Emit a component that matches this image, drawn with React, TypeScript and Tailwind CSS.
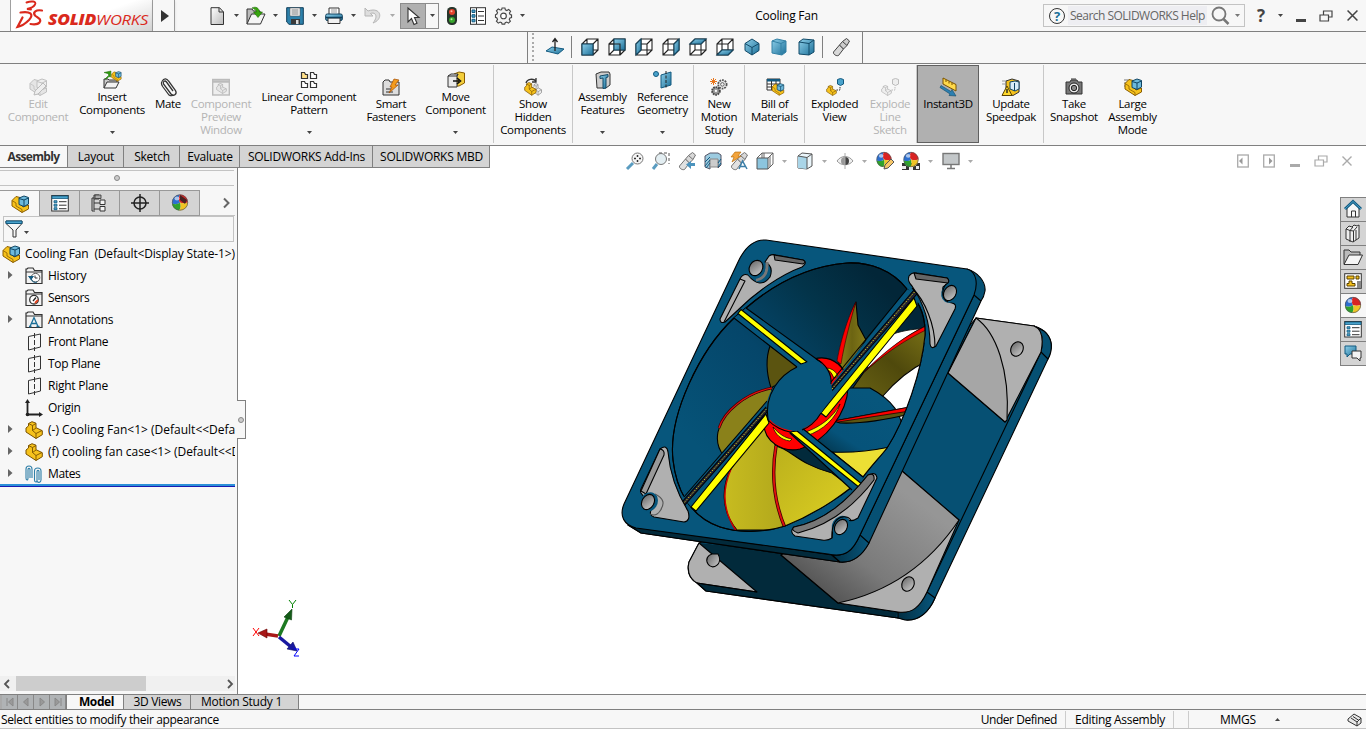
import type { ReactNode } from "react";

const K = "#333";
const BL = "#4aa3cc";
const DB = "#135a80";

function Svg({ w = 18, h = 18, children }: { w?: number; h?: number; children: ReactNode }) {
  return (
    <svg width={w} height={h} viewBox={`0 0 ${w} ${h}`} fill="none" className="block shrink-0 overflow-visible">
      {children}
    </svg>
  );
}

function Caret({ color = "#444" }: { color?: string }) {
  return (
    <Svg w={5} h={3}>
      <path d="M0 0h5L2.5 3z" fill={color} />
    </Svg>
  );
}

function Defs() {
  return (
    <svg width="0" height="0" className="absolute">
      <defs>
        <linearGradient id="blue" x1="0" y1="0" x2="1" y2="1">
          <stop offset="0" stopColor="#8fd0ea" />
          <stop offset="1" stopColor="#1b6f98" />
        </linearGradient>
        <linearGradient id="grey" x1="0" y1="0" x2="1" y2="1">
          <stop offset="0" stopColor="#fff" />
          <stop offset="1" stopColor="#bbb" />
        </linearGradient>
        <linearGradient id="surf" x1="902" y1="490" x2="820" y2="600" gradientUnits="userSpaceOnUse">
          <stop offset="0" stopColor="#969696" />
          <stop offset="0.6" stopColor="#7a7a7a" />
          <stop offset="1" stopColor="#505050" />
        </linearGradient>
        <linearGradient id="bore" x1="700" y1="450" x2="880" y2="280" gradientUnits="userSpaceOnUse">
          <stop offset="0" stopColor="#065378" />
          <stop offset="0.45" stopColor="#05466a" />
          <stop offset="0.75" stopColor="#03344a" />
          <stop offset="1" stopColor="#022638" />
        </linearGradient>
        <linearGradient id="rotor" x1="870" y1="395" x2="825" y2="465" gradientUnits="userSpaceOnUse">
          <stop offset="0" stopColor="#07567c" />
          <stop offset="0.6" stopColor="#06537a" />
          <stop offset="1" stopColor="#022a3b" />
        </linearGradient>
        <linearGradient id="olive" x1="838" y1="0" x2="866" y2="0" gradientUnits="userSpaceOnUse">
          <stop offset="0" stopColor="#8d8418" />
          <stop offset="0.5" stopColor="#6c6412" />
          <stop offset="1" stopColor="#857c1a" />
        </linearGradient>
        <linearGradient id="olive2" x1="920" y1="335" x2="870" y2="395" gradientUnits="userSpaceOnUse">
          <stop offset="0" stopColor="#716914" />
          <stop offset="0.5" stopColor="#4f490c" />
          <stop offset="1" stopColor="#635c12" />
        </linearGradient>
        <linearGradient id="yel1" x1="720" y1="0" x2="780" y2="0" gradientUnits="userSpaceOnUse">
          <stop offset="0" stopColor="#c9bd20" />
          <stop offset="1" stopColor="#b3a91c" />
        </linearGradient>
        <linearGradient id="yel2" x1="780" y1="450" x2="850" y2="510" gradientUnits="userSpaceOnUse">
          <stop offset="0" stopColor="#bdb21c" />
          <stop offset="1" stopColor="#dacd22" />
        </linearGradient>
        <linearGradient id="hole" x1="0" y1="0" x2="1" y2="0.6">
          <stop offset="0" stopColor="#666" />
          <stop offset="1" stopColor="#bdbdbd" />
        </linearGradient>
        <linearGradient id="round" x1="0" y1="0" x2="1" y2="0">
          <stop offset="0" stopColor="#022e42" />
          <stop offset="1" stopColor="#07567c" />
        </linearGradient>
      </defs>
    </svg>
  );
}

/* ---------- shared glyphs ---------- */

const Ball = ({ cx = 9, cy = 9, r = 8 }: { cx?: number; cy?: number; r?: number }) => (
  <g transform={`translate(${cx} ${cy}) scale(${r / 8})`}>
    <path d="M0 0C-2-3-1-6 0-8A8 8 0 0 0-8 1C-5 2-2 2 0 0z" fill="#2d6fd0" />
    <path d="M0 0C-2-3-1-6 0-8A8 8 0 0 1 8 0C5 1 2 1 0 0z" fill="#d92323" />
    <path d="M0 0C1 3 1 6-1 8A8 8 0 0 1-8 1C-5 2-2 2 0 0z" fill="#2fa32c" />
    <path d="M0 0C1 3 1 6-1 8A8 8 0 0 0 8 0C5 1 2 1 0 0z" fill="#f0c424" />
    <circle r="7.7" stroke="#555" strokeWidth=".7" />
    <ellipse cx="-3" cy="-4" rx="2.5" ry="2" fill="#fff" opacity=".6" />
  </g>
);

const Part = ({ c = "#f6c21c", s = "#7a5200" }: { c?: string; s?: string }) => (
  <g stroke={s} strokeWidth="1" strokeLinejoin="round">
    <path d="M1 7L3.500 5V2.500L7 .7l4 1.500v4.500l6.300 3v4L11 17.500 1 11z" fill={c} />
    <path d="M3.500 2.500L7.500 4.500v5l3.500 3v5M7.500 4.500L11 2.500M11 12.500l6-3M7.500 9.500L11 7" strokeWidth=".9" />
  </g>
);

const Asm = ({ dim = false }: { dim?: boolean }) => (
  <g strokeLinejoin="round" strokeWidth="1">
    <path d="M1 5.500L5 1.500l4 1V9l3 3 5.500-2v4L11 17.500 1 11z" fill={dim ? "#e4e4e4" : "#f6c21c"} stroke={dim ? "#bbb" : "#8a5d00"} />
    <path d="M1 5.500l4 2.500v3l6 3.500v3" stroke={dim ? "#bbb" : "#8a5d00"} strokeWidth=".8" />
    <path d="M8 3l5-2 4.500 1.500V9L13 11.500 8 9.500z" fill={dim ? "#eee" : "#6db9dc"} stroke={dim ? "#bbb" : "#0f4563"} />
    <path d="M8 3.500l5 1.500 4.500-2M13 5v6.500" stroke={dim ? "#bbb" : "#0f4563"} />
  </g>
);

const ListGlyph = () => (
  <>
    <rect x=".7" y="1.500" width="16.600" height="15.500" fill="#fff" stroke={K} />
    <path d="M1 2h16v2.500H1z" fill={BL} stroke={DB} strokeWidth=".8" />
    <path d="M3 6.700h3v2H3zM3 10.200h3v2H3zM3 13.700h3v2H3z" fill={BL} stroke={DB} strokeWidth=".8" />
    <path d="M8 7.700h7.500M8 11.200h7.500M8 14.700h7.500" stroke={K} />
  </>
);

const Folder = ({ children }: { children?: ReactNode }) => (
  <Svg>
    <path d="M1 16.500V2h1l1-1h5l1.500 2.500H17v13z" fill="#f2f2f2" stroke={K} strokeWidth="1.200" />
    <path d="M1 5h16" stroke={K} />
    {children}
  </Svg>
);

const Plane = () => (
  <Svg>
    <path d="M3.500 3.500l12-2.500v13l-12 3z" stroke="#333" />
    <path d="M9.500 0v18" stroke="#333" strokeDasharray="5 2" />
  </Svg>
);

/* ---------- title bar ---------- */

const NewDoc = () => (
  <Svg>
    <path d="M3 .7h8.500L15.500 5v12.500H3z" fill="url(#grey)" stroke={K} />
    <path d="M11 .7V5h4.500" stroke={K} />
  </Svg>
);
const OpenDoc = () => (
  <Svg w={20}>
    <path d="M1 17V2h5l1.500 2H14v5" fill="#bbb" stroke={K} />
    <path d="M1 17L5.500 7H19l-4.500 10z" fill="#f5f5f5" stroke={K} />
    <path d="M6 1c4-2 7 0 7.500 4h3l-4.500 5.500L7.500 5h3C10 3 8 1.500 6 1z" fill="#37a50e" stroke="#1f6b04" strokeWidth=".6" />
  </Svg>
);
const Save = () => (
  <Svg>
    <path d="M.7.7h16.600v16.600H3L.7 15z" fill="#2d81ab" stroke="#0f3e5a" />
    <path d="M4 1h10v8H4z" fill="#fff" stroke="#555" strokeWidth=".6" />
    <path d="M5.500 3h7M5.500 5h7M5.500 7h7" stroke="#777" />
    <path d="M5 12h9v5H5z" fill="#3a3a3a" />
    <path d="M10 13h2.500v4H10z" fill="#ddd" />
  </Svg>
);
const Print = () => (
  <Svg>
    <path d="M4 8V1h10v7" fill="#fff" stroke={K} />
    <path d="M6 3h6M6 5h6" stroke="#999" />
    <rect x=".7" y="7" width="16.600" height="6.500" rx="1.500" fill="url(#blue)" stroke="#0f3e5a" />
    <path d="M3 11h12v5.500H3z" fill="#f2f2f2" stroke={K} />
    <path d="M.7 10.500h16.600" stroke="#0f3e5a" strokeWidth="1.500" />
  </Svg>
);
const Undo = () => (
  <Svg>
    <path d="M1 1v8h8L6.500 6.500c5-2 8 3 2.500 9.500 9-3 9-13 0-13-2 0-3.500.5-5 1z" fill="#dedede" stroke="#b5b5b5" />
  </Svg>
);
const Pointer = () => (
  <Svg>
    <path d="M4 1v14l3.500-3.500 2.500 6 3-1.300-2.500-5.700H15z" fill="#fff" stroke={K} strokeWidth="1.100" />
  </Svg>
);
const Traffic = () => (
  <Svg w={12}>
    <rect x="1" y="0" width="10" height="18" rx="4.500" fill="#26352b" />
    <circle cx="6" cy="5" r="3" fill="#e4422c" />
    <circle cx="5.500" cy="4.200" r="1" fill="#ffb9a8" />
    <circle cx="6" cy="13" r="3" fill="#38a52d" />
    <circle cx="5.500" cy="12.200" r="1" fill="#b8f0a8" />
  </Svg>
);
const Opts = () => (
  <Svg>
    <rect x="1.500" y=".7" width="15" height="16.600" fill="#fff" stroke={K} />
    <path d="M7.500 1v16" stroke={K} />
    <path d="M3 3h3v2.500H3zM3 7.700h3v2.500H3zM3 12.300h3v2.500H3z" fill={BL} stroke={DB} />
    <path d="M9 4.500h6M9 9h6M9 13.500h6" stroke={K} />
  </Svg>
);
const Gear = ({ s = 18 }: { s?: number }) => (
  <svg width={s} height={s} viewBox="0 0 18 18" fill="none" className="block overflow-visible">
    <path d="M7.500 1h3l.5 2 1.600.7 1.900-1.200 2 2-1.200 1.900.7 1.600 1.500.5v2.600l-1.700.5-.7 1.600 1.200 1.900-2 2-1.900-1.200-1.600.7-.5 1.500h-2.800L7 16.600l-1.600-.7-1.900 1.200-2-2 1.200-1.900L2 11.600.5 11V8.300L2 7.500l.7-1.600-1.200-1.900 2-2 1.900 1.200L7 2.900z" fill="#f3f3f3" stroke="#444" strokeWidth="1.200" />
    <circle cx="9" cy="9.500" r="3" stroke="#444" strokeWidth="1.200" fill="#fff" />
  </svg>
);

function Restore({ c = "#444" }: { c?: string }) {
  return (
    <Svg w={14} h={12}>
      <path d="M1 5h8.500v6H1zM4.500 4.500V1H13v6H9.500" stroke={c} strokeWidth="1.200" />
    </Svg>
  );
}
function Close({ c = "#444", s = 10 }: { c?: string; s?: number }) {
  return (
    <svg width={s} height={s} viewBox="0 0 10 10" className="block">
      <path d="M.5.5l9 9M9.500.5l-9 9" stroke={c} strokeWidth="1.400" />
    </svg>
  );
}

function TitleBar() {
  const quick = [<NewDoc />, <OpenDoc />, <Save />, <Print />, <Undo />];
  return (
    <header className="flex h-8 items-center border-b border-[#808080] bg-[#f7f7f7]">
      <div className="ml-[10px] flex h-[31px] w-[143px] items-start border-x border-[#a0a0a0] bg-[linear-gradient(160deg,#fff_55%,#d4d4d4)]">
        <svg width="140" height="30" viewBox="11 0 140 30" className="block">
          <g fill="none" stroke="#da291c" strokeWidth="2.200" strokeLinecap="round">
            <path d="M26.500 2.500C31 .8 37 1 35 4.500 33.500 7.500 29.500 8.500 27 9L31 9.500" strokeWidth="1.900" />
            <path d="M20.500 12.500C30 11 34.500 14 29 20 26 23 22 26 17.500 27L22.500 17.500" />
            <path d="M42 10.500C36 9.500 32.500 12 35 15.500 38 18 42 19 39.500 22.500 37.500 25 34 24.500 30.500 24" />
          </g>
          <text x="48" y="24.700" fontFamily="Open Sans, sans-serif" fontStyle="italic" fontWeight="800" fontSize="15" textLength="48" lengthAdjust="spacingAndGlyphs" fill="#da291c">SOLID</text>
          <text x="96" y="24.700" fontFamily="Open Sans, sans-serif" fontStyle="italic" fontSize="15" textLength="52" lengthAdjust="spacingAndGlyphs" fill="#da291c">WORKS</text>
        </svg>
      </div>
      <div className="flex h-8 w-[22px] items-center border-r border-[#999] pl-2 shadow-sm">
        <Svg w={8} h={12}><path d="M0 0l8 6-8 6z" fill="#333" /></Svg>
      </div>
      <div className="ml-[30px] flex">
        {quick.map((q, i) => (
          <div key={i} className="flex items-center">
            <div className="flex w-6 justify-center">{q}</div>
            <div className="flex w-[15px] justify-center"><Caret color={i === 4 ? "#aaa" : "#444"} /></div>
          </div>
        ))}
      </div>
      <div className="flex h-[26px] w-[39px] border border-[#8c8c8c]">
        <div className="flex w-[25px] items-center justify-center border-r border-[#8c8c8c] bg-[#b0b0b0]"><Pointer /></div>
        <div className="flex flex-1 items-center justify-center"><Caret /></div>
      </div>
      <div className="flex w-[26px] justify-center"><Traffic /></div>
      <div className="flex w-[26px] justify-center"><Opts /></div>
      <div className="flex w-[25px] justify-center"><Gear s={17} /></div>
      <div className="flex w-[13px] justify-center"><Caret /></div>
      <div className="ml-[187px] w-[141px] pt-px text-center">Cooling Fan</div>
      <div className="ml-auto flex h-[23px] w-[202px] items-center border border-[#c3c3c3] text-[#666]">
        <span className="ml-[5px] flex h-4 w-4 shrink-0 items-center justify-center rounded-full border border-[#333] text-[13px] font-bold text-[#1b6f98]">?</span>
        <span className="ml-[3px] flex h-[19px] w-[139px] shrink-0 items-center whitespace-nowrap bg-[#eeeef2] pl-[2px] pt-px tracking-[-0.52px]">Search SOLIDWORKS Help</span>
        <span className="ml-[4px]">
          <Svg w={19} h={20}>
            <circle cx="8" cy="8" r="6.500" stroke="#777" strokeWidth="1.800" />
            <path d="M12.500 13l5 5" stroke="#777" strokeWidth="2.500" />
          </Svg>
        </span>
        <span className="ml-[5px]"><Caret color="#777" /></span>
      </div>
      <div className="flex w-[121px] items-center">
        <span className="ml-[12px] w-[12px] text-[17px] font-bold leading-none text-[#444]">?</span>
        <span className="ml-[9px]"><Caret /></span>
        <span className="ml-[13px] mt-[10px] h-[3px] w-[10px] bg-[#444]" />
        <span className="ml-[13px]"><Restore /></span>
        <span className="ml-[14px]"><Close s={11} /></span>
      </div>
    </header>
  );
}

/* ---------- view cube bar ---------- */

const cubeFaces = [
  "M1 6h11v11H1z",
  "M6 1h11v11H6z",
  "M1 6l5-5v11l-5 5z",
  "M12 6l5-5v11l-5 5z",
  "M1 6l5-5h11l-5 5z",
  "M1 17l5-5h11l-5 5z",
];

function ViewBar() {
  return (
    <div className="flex h-8 border-b border-[#808080] bg-[#f7f7f7]">
      <div className="ml-[527px] flex w-[336px] items-center border-x border-[#808080] pb-px">
        <div className="ml-1 flex h-7 w-[3px] flex-col justify-between">
          {[0, 1, 2, 3, 4, 5, 6].map((i) => <span key={i} className="h-[2px] w-[2px] bg-[#aaa]" />)}
        </div>
        <div className="ml-[8px] flex w-[24px] justify-center">
          <Svg>
            <path d="M0 13l6-4 12 2-6 5z" fill="url(#blue)" stroke={DB} />
            <path d="M9 13V1M6.500 4L9 .5 11.500 4" stroke="#222" strokeWidth="1.300" />
          </Svg>
        </div>
        <div className="ml-[4px] h-[22px] w-px bg-[#808080]" />
        <div className="ml-[4px] flex">
          {cubeFaces.map((d, i) => (
            <div key={i} className="flex w-[27px] justify-center">
              <Svg>
                <path d="M1 6h11v11H1zM6 1h11v11H6zM1 6l5-5M12 6l5-5M1 17l5-5M12 17l5-5" fill="#fff" stroke="#222" strokeWidth="1.100" />
                <path d={d} fill="url(#blue)" stroke="#14455f" strokeWidth="1.100" />
                {i === 1 && <path d="M1 6h11v11" stroke="#222" strokeWidth="1.100" />}
              </Svg>
            </div>
          ))}
          <div className="flex w-[27px] justify-center">
            <Svg><path d="M9 1l7 4.500v7L9 17l-7-4.500v-7z" fill="url(#blue)" stroke="#124a68" /><path d="M2 5.500l7 4 7-4M9 9.500V17" stroke="#124a68" /></Svg>
          </div>
          <div className="flex w-[27px] justify-center">
            <Svg><path d="M2 3l5-2 9 2v11l-4 3-10-2z" fill="url(#blue)" stroke="#3481a5" /><path d="M2 3l9 2.500 5-2.500M11 5.500V17" stroke="#3481a5" /></Svg>
          </div>
          <div className="flex w-[27px] justify-center">
            <Svg><path d="M2 4l4-3 11 1v12l-5 3-10-1z" fill="url(#blue)" stroke="#124a68" /><path d="M2 4l10 1.500L17 2M12 5.500V17" stroke="#124a68" /></Svg>
          </div>
        </div>
        <div className="ml-[3px] h-[22px] w-px bg-[#808080]" />
        <div className="ml-[9px]">
          <Svg w={19}><Spyglass /></Svg>
        </div>
      </div>
    </div>
  );
}

const Spyglass = () => (
  <>
    <path d="M1.500 14l6-7 4 4-5 6.500c-2 .8-5.500-1-5-3.500z" fill="#d8d8d8" stroke="#444" />
    <path d="M7.500 7l3-3.500 4-3 3 2.500-2.500 4.500-3.500 3.500z" fill="#ccc" stroke="#444" />
    <path d="M10.500 3.500l4.500 4" stroke="#444" />
  </>
);

/* ---------- ribbon ---------- */

const ic = {
  edit: <Svg><g opacity=".9"><Asm dim /></g><path d="M5 17l1-4 8-8 3 3-8 8z" fill="#eee" stroke="#bbb" /></Svg>,
  insert: (
    <Svg>
      <path d="M1 17V8h4l1 1h8v3" fill="#ccc" stroke={K} />
      <path d="M1 17l3-6h12l-3 6z" fill="#f2f2f2" stroke={K} />
      <g transform="translate(8 0) scale(.58)"><Asm /></g>
      <path d="M2 8l4-4-1.500-1.500L1 1.500 8 0l-.5 6L6 5.500 3.500 8z" fill="#2f9a10" stroke="#1c6a05" strokeWidth=".5" />
    </Svg>
  ),
  mate: (
    <Svg>
      <path d="M3 3.500C5-.5 8 .5 9.500 3l7 9.500c2 3.500-2 6.500-4.500 3.500L4.500 6C3.500 3.500 6 2 7.500 4l6.500 9" stroke={K} strokeWidth="1.300" />
      <path d="M3 3.500c-1.500 2 0 4 1 5.500l6 8c2.500 1.500 4 .5 4-.5" stroke={K} strokeWidth="1.200" />
    </Svg>
  ),
  preview: (
    <Svg>
      <rect x=".7" y="1.500" width="16.600" height="15.500" fill="#eee" stroke="#bbb" strokeWidth="1.400" />
      <path d="M1 3.500h16" stroke="#bbb" strokeWidth="2.500" />
      <g transform="translate(4 5) scale(.6)"><Part c="#e6e6e6" s="#aaa" /></g>
    </Svg>
  ),
  linear: (
    <Svg>
      <path d="M1.500 1.500h3l1 2h2v4h-6z" fill="#ffe08a" stroke={K} strokeWidth="1.200" />
      <path d="M10.500 1.500h3l1 2h2v4h-6zM1.500 10.500h3l1 2h2v4h-6zM10.500 10.500h3l1 2h2v4h-6z" fill="#fff" stroke={K} strokeWidth="1.200" />
    </Svg>
  ),
  smart: (
    <Svg>
      <path d="M1 17V4l2-2h4l1 2h9v13z" fill="#ddd" stroke={K} />
      <path d="M4 14h7M4 11h5" stroke={K} />
      <path d="M12 1l5 1-4 5h3l-9 8 3-6H8z" fill="#f49c1c" stroke="#a34c00" strokeWidth=".7" />
    </Svg>
  ),
  move: (
    <Svg>
      <path d="M7 3l5-2 5.500 1v10L12 15H8z" fill="#f4cf3c" stroke="#8a5d00" />
      <path d="M1 5l3-2h7l-1 2v11H1z" fill="#e9e9e9" stroke={K} /><path d="M1 5h9M10 5l1-2" stroke={K} />
      <path d="M6 10h6M10 7l3.500 3-3.500 3" stroke="#111" strokeWidth="1.600" />
    </Svg>
  ),
  show: (
    <Svg>
      <g transform="translate(8 5) scale(.55 .7)"><Part c="#eee" s="#777" /></g>
      <g transform="translate(0 4) scale(.7 .76)"><Part /></g>
      <path d="M2 5c1-4 7-5 10-2M12 0v4H8" stroke={K} strokeWidth="1.300" />
    </Svg>
  ),
  feat: (
    <Svg>
      <path d="M2 3l5-2h8l1 2v11l-4 3H3z" fill="#ccc" stroke={K} />
      <path d="M6 5l8-1.500V6l-2 .5V17l-3 .5V7L6 7.500z" fill="url(#blue)" stroke="#124a68" />
    </Svg>
  ),
  ref: (
    <Svg>
      <path d="M7 4l10-3v13L7 17z" fill="url(#blue)" stroke={DB} /><path d="M12 0v18" stroke="#222" strokeDasharray="3 1.500" />
      <circle cx="2" cy="3" r="2.500" fill={BL} stroke={DB} />
    </Svg>
  ),
  motion: (
    <Svg>
      <g transform="translate(7 1) scale(.6)"><circle cx="9" cy="9" r="7" stroke="#555" strokeWidth="3" strokeDasharray="3 1.500" fill="#eee" /><circle cx="9" cy="9" r="3" stroke="#555" strokeWidth="1.500" /></g>
      <g transform="translate(1 8) scale(.55)"><circle cx="9" cy="9" r="7" stroke="#444" strokeWidth="3.500" strokeDasharray="3 1.500" fill="#999" /><circle cx="9" cy="9" r="2" fill="#fff" /></g>
      <path d="M3.500 0v7M0 3.500h7M1 1l5 5M6 1L1 6" stroke="#e8761c" />
    </Svg>
  ),
  bom: (
    <Svg>
      <path d="M1 1h13v11H1z" fill="#fff" stroke={K} /><path d="M1 1h13v2.500H1z" fill={DB} />
      <path d="M1 6h13M1 9h13M5.500 3v9M10 3v9" stroke={K} />
      <g transform="translate(5.500 5) scale(.7)"><Asm /></g>
    </Svg>
  ),
  explode: (
    <Svg>
      <g transform="translate(0 7) scale(.6)"><Part /></g>
      <path d="M11.500 1.500l3-1 3 1V6l-3 1.500-3-1.500z" fill={BL} stroke={DB} />
      <path d="M14 9v3h-4" stroke={K} strokeDasharray="1.500 1" />
    </Svg>
  ),
  sketch: (
    <Svg>
      <g transform="translate(0 7) scale(.6)"><Part c="#eee" s="#aaa" /></g>
      <path d="M11.500 1.500l3-1 3 1V6l-3 1.500-3-1.500z" fill="#eee" stroke="#bbb" />
      <path d="M14 9v3h-4" stroke="#bbb" strokeDasharray="1.500 1" />
    </Svg>
  ),
  instant: (
    <Svg>
      <path d="M4 0l13 6.500V13L4 6z" fill="#ffd94a" stroke="#7a5200" /><path d="M7 2v2M10 3.500v2M13 5v2" stroke="#7a5200" />
      <path d="M2 7.500l10 6 1-2 4 6.500-7-.5 1-1.500L1 9.500z" fill="#2c7fb0" stroke="#124a68" strokeWidth=".6" />
    </Svg>
  ),
  speed: (
    <Svg>
      <path d="M4 3l6-2 7 2v11l-6 3.500L4 15z" fill="#f6c21c" stroke={K} />
      <path d="M8 4l5-1 4 1v7l-4 2-5-2z" fill="#d9eef8" stroke="#0f4563" /><path d="M12.500 5v8" stroke="#0f4563" />
      <path d="M5 8l5 9.500H0z" fill="#ffd92c" stroke="#5a4200" /><path d="M5 11v4" stroke="#222" strokeWidth="1.400" />
      <path d="M0 3h4M0 6h3" stroke="#999" />
    </Svg>
  ),
  camera: (
    <Svg>
      <path d="M1 4h4l1-2h6l1 2h4v12H1z" fill="#777" stroke={K} /><path d="M6 1h5" stroke={K} />
      <circle cx="9" cy="10" r="5" fill="#eee" stroke="#222" /><circle cx="9" cy="10" r="2.700" fill="#888" stroke="#222" />
    </Svg>
  ),
  large: <Svg><path d="M0 2h6M0 5h4M0 8h3" stroke="#777" /><Asm /></Svg>,
};

type Cell = { w: string; t: string[]; icon: ReactNode; drop?: boolean; off?: boolean; on?: boolean; sep?: boolean };

const ribbon: Cell[] = [
  { w: "w-[76px]", t: ["Edit", "Component"], icon: ic.edit, off: true },
  { w: "w-[72px]", t: ["Insert", "Components"], icon: ic.insert, drop: true },
  { w: "w-[40px]", t: ["Mate"], icon: ic.mate },
  { w: "w-[66px]", t: ["Component", "Preview", "Window"], icon: ic.preview, off: true },
  { w: "w-[110px]", t: ["Linear Component", "Pattern"], icon: ic.linear, drop: true },
  { w: "w-[54px]", t: ["Smart", "Fasteners"], icon: ic.smart },
  { w: "w-[76px]", t: ["Move", "Component"], icon: ic.move, drop: true, sep: true },
  { w: "w-[79px]", t: ["Show", "Hidden", "Components"], icon: ic.show, sep: true },
  { w: "w-[59px]", t: ["Assembly", "Features"], icon: ic.feat, drop: true },
  { w: "w-[62px]", t: ["Reference", "Geometry"], icon: ic.ref, drop: true, sep: true },
  { w: "w-[51px]", t: ["New", "Motion", "Study"], icon: ic.motion, sep: true },
  { w: "w-[60px]", t: ["Bill of", "Materials"], icon: ic.bom, sep: true },
  { w: "w-[59px]", t: ["Exploded", "View"], icon: ic.explode },
  { w: "w-[53px]", t: ["Explode", "Line", "Sketch"], icon: ic.sketch, off: true, sep: true },
  { w: "w-[62px]", t: ["Instant3D"], icon: ic.instant, on: true },
  { w: "w-[65px]", t: ["Update", "Speedpak"], icon: ic.speed, sep: true },
  { w: "w-[60px]", t: ["Take", "Snapshot"], icon: ic.camera },
  { w: "w-[57px]", t: ["Large", "Assembly", "Mode"], icon: ic.large },
];

function Ribbon() {
  return (
    <div className="flex h-[82px] border-b border-[#808080] bg-[#f7f7f7] pt-px">
      {ribbon.map((c, i) => (
        <div
          key={i}
          className={`flex h-[78px] shrink-0 flex-col items-center ${c.w} ${c.sep ? "border-r border-[#c8c8c8]" : ""} ${c.on ? "border border-[#606060] bg-[#b0b0b0]" : ""} ${c.off ? "text-[#b4b4b4]" : "text-black"} ${c.drop ? "pt-[6px]" : c.on ? "pt-3" : "pt-[13px]"}`}
        >
          {c.icon}
          <div className="mt-px whitespace-nowrap text-center text-[11.5px] leading-[13px] tracking-[-0.32px]">
            {c.t.map((l) => <div key={l}>{l}</div>)}
          </div>
          {c.drop && <div className="mt-[15px]"><Caret /></div>}
        </div>
      ))}
    </div>
  );
}

/* ---------- tabs + heads-up bar ---------- */

const tabs: [string, string][] = [
  ["w-[56px]", "Layout"],
  ["w-[56px]", "Sketch"],
  ["w-[60px]", "Evaluate"],
  ["w-[133px]", "SOLIDWORKS Add-Ins"],
  ["w-[117px]", "SOLIDWORKS MBD"],
];

const heads: [string, ReactNode, boolean?][] = [
  ["w-[26px]", <Svg><circle cx="11.500" cy="6.500" r="5.500" fill="#f5f5f5" stroke="#777" /><path d="M11.500 3v7M8 6.500h7" stroke="#333" strokeDasharray="2 3" strokeWidth="1.500" /><path d="M1 17l6-6" stroke="#5a9cc0" strokeWidth="3" /></Svg>],
  ["w-[26px]", <Svg><path d="M7 1h10v11" stroke="#555" strokeDasharray="3 2" /><circle cx="9" cy="7" r="5.500" fill="#e3eef2" stroke="#777" /><path d="M1 17l4-5" stroke="#5a9cc0" strokeWidth="3" /></Svg>],
  ["w-[26px]", <Svg><g opacity=".75"><Spyglass /></g><path d="M17 11v3h-4v3l-5-4.500L13 9v2z" fill="#4b93bd" /></Svg>],
  ["w-[26px]", <Svg><path d="M1 4l5-3h8l3 2v10l-3 3V8H6v9l-5-2z" fill="#9ccbe0" stroke="#556" /><path d="M6 7h8v8H6z" fill="#ccc" stroke="#888" /><path d="M1 14L6 8M1 10l5-5M2 16l4-5M14 15l3-4M14 11l3-4" stroke="#135a80" /></Svg>],
  ["w-[26px]", <Svg><g opacity=".75"><Spyglass /></g><path d="M5 0h6L8 4h3L2 10l2-5H1z" fill="#f3a43c" stroke="#b26400" strokeWidth=".6" /><path d="M9 17l3.500-8L17 17M10.500 14.500h5" stroke="#3c7fa8" strokeWidth="1.500" /></Svg>],
  ["w-[26px]", <Svg><path d="M1 6h11v11H1z" fill="#8cc5de" stroke="#555" /><path d="M1 6l5-5h11v11l-5 5M17 1l-5 5M8 1v5M14 4v11M6 1v5" stroke="#555" strokeWidth=".9" /></Svg>, true],
  ["w-[26px]", <Svg><path d="M2 4l4-3 10 1v12l-5 3-9-1z" fill="#eaf5fa" stroke="#555" /><path d="M2 4l9 1.500V17L2 16z" fill="#a9d5e8" /><path d="M2 4l9 1.500L16 2M11 5.500V17" stroke="#555" /></Svg>, true],
  ["w-[26px]", <Svg><path d="M1 9c4-6 12-6 16 0-4 5-12 5-16 0z" fill="#eee" stroke="#999" /><path d="M9 5a4 4 0 0 1 0 8z" fill="#444" /><path d="M9 5a4 4 0 0 0 0 8z" fill="#999" /><path d="M9 1v16" stroke="#aaa" /></Svg>, true],
  ["w-[26px]", <Svg><Ball cx={8} cy={7.500} r={7.500} /><path d="M8 17l1-4 6-6 3 3-6 6z" fill="#f6c76a" stroke="#555" /></Svg>],
  ["w-[26px]", <Svg><path d="M0 11h18v7H0z" fill="#333" /><path d="M0 14h4v3H0zM4 11h3v3H4zM11 11h3v3h-3zM7 15h4v3H7zM14 14h3v3h-3z" fill="#eee" /><Ball cx={9} cy={7.500} r={7.500} /></Svg>, true],
  ["w-[26px]", <Svg><rect x="1" y="1.500" width="16" height="11" fill="#c3c7c9" stroke="#777" strokeWidth="1.400" /><path d="M9 13v3M5 16.500h8" stroke="#777" strokeWidth="1.500" /></Svg>, true],
];

function PageNav({ flip = false }: { flip?: boolean }) {
  return (
    <Svg w={12} h={14}>
      <rect x=".7" y="1" width="10.600" height="12" stroke="#aaa" strokeWidth="1.300" />
      <path d={flip ? "M6 3.500l3.500 3.500L6 10.500z" : "M5.500 3.500L2 7l3.500 3.500z"} fill="#999" />
    </Svg>
  );
}

function TabRow() {
  const gaps = ["ml-0", "ml-0", "ml-0", "ml-0", "ml-0", "ml-0", "ml-[14px]", "ml-[14px]", "ml-[14px]", "ml-0", "ml-[14px]"];
  return (
    <div className="flex h-[22px] bg-white">
      <div className="flex h-[22px] w-[67px] items-center justify-center border-b border-[#808080] bg-[#f7f7f7] font-bold tracking-[-0.65px] text-[#333]">Assembly</div>
      <div className="flex border-l border-[#808080]">
        {tabs.map(([w, t]) => (
          <div key={t} className={`flex h-[22px] items-center justify-center whitespace-nowrap border-b border-r border-[#808080] bg-[#d4d4d4] pl-px ${w}`}>{t}</div>
        ))}
      </div>
      <div className="ml-[132px] flex h-[30px] items-center">
        {heads.map(([w, icon, drop], i) => (
          <div key={i} className={`flex items-center justify-center ${w} ${gaps[i]}`}>
            <div className="relative">
              {icon}
              {drop && <div className="absolute left-[26px] top-2"><Caret color="#aaa" /></div>}
            </div>
          </div>
        ))}
      </div>
      <div className="ml-auto mr-[14px] flex h-[30px] items-center">
        <PageNav />
        <span className="ml-[14px]"><PageNav flip /></span>
        <span className="ml-[15px] mt-[9px] h-[3px] w-[10px] bg-[#aaa]" />
        <span className="ml-[14px]"><Restore c="#aaa" /></span>
        <span className="ml-[14px]"><Close c="#aaa" s={10} /></span>
      </div>
    </div>
  );
}

/* ---------- feature tree ---------- */

const Clip2 = () => (
  <Svg>
    <g stroke="#2f7fa8" strokeWidth="1.100">
      <path d="M5 13V4.500c0-1.500-2-1.500-2 0V13c0 3-2 2.500-2 0V4c0-4 6-4 6 0v9" />
      <path d="M14 15V6.500c0-1.500-2-1.500-2 0V15c0 3-2.500 2.500-2.500 0V6c0-4 6.500-4 6.500 0v9c0 3-3.500 3-4 1" />
    </g>
  </Svg>
);

const rows: { t: string; icon: ReactNode; exp?: boolean; wide?: string }[] = [
  { t: "History", exp: true, icon: <Folder><circle cx="10.500" cy="10.700" r="4.300" fill="#fff" stroke="#555" /><path d="M10 8.500v2.500h2.500" stroke={K} /><path d="M3.500 9l2.500 3.500L8.500 9" fill={DB} stroke={DB} /><path d="M6 12c1 3 4 4 6 3" stroke={DB} /></Folder> },
  { t: "Sensors", icon: <Folder><circle cx="9" cy="10.700" r="4.300" fill="#fff" stroke="#333" strokeWidth="1.300" /><path d="M8 12l3-3.500" stroke="#222" strokeWidth="1.300" /><path d="M10 14l3-3" stroke="#e3401c" strokeWidth="1.800" /></Folder>, wide: "tracking-[-0.4px]" },
  { t: "Annotations", exp: true, icon: <Folder><path d="M5 15.500L9 6.500l4 9M6.500 12.500h5M4 15.500h2.500M11.500 15.500h3" stroke="#1b6f98" strokeWidth="1.300" /></Folder> },
  { t: "Front Plane", icon: <Plane />, wide: "tracking-[-0.35px]" },
  { t: "Top Plane", icon: <Plane />, wide: "tracking-[-0.35px]" },
  { t: "Right Plane", icon: <Plane /> },
  { t: "Origin", icon: <Svg><path d="M2.500 2v13.500H15" stroke="#222" strokeWidth="1.800" /><path d="M2.500 0L5 4H0zM18 15.500L14 13v5z" fill="#222" /><circle cx="2.500" cy="15.500" r="1.800" fill="#222" /></Svg> },
  { t: "(-) Cooling Fan<1> (Default<<Defa", exp: true, icon: <Svg><Part /></Svg>, wide: "tracking-[0px]" },
  { t: "(f) cooling fan case<1> (Default<<D", exp: true, icon: <Svg><Part /></Svg>, wide: "tracking-[-0.05px]" },
  { t: "Mates", exp: true, icon: <Clip2 />, wide: "tracking-[-0.35px]" },
];

function Tree() {
  const panelTabs = [
    <Svg><ListGlyph /></Svg>,
    <Svg><path d="M3 1h5v4H3zM3 5v11M3 4H1v13h3M3 9h6M3 15h6" stroke={K} /><path d="M9 6h5v4.500H9zM9 12.500h5V17H9z" stroke={K} fill="#f2f2f2" /><path d="M4 1h6v3.500H4z" fill="#aaa" stroke={K} strokeWidth=".8" /></Svg>,
    <Svg><circle cx="9" cy="9" r="6" stroke="#222" strokeWidth="1.500" /><path d="M9 0v18M0 9h18" stroke="#222" strokeWidth="1.500" /></Svg>,
    <Svg><Ball cy={8.500} /><path d="M9 1l7 5-2 4-5-4z" fill="#222" opacity=".8" /></Svg>,
  ];
  return (
    <aside className="flex w-[238px] shrink-0 flex-col border-r border-[#808080] bg-[#f7f7f7]">
      <div className="mr-[3px] mt-[2px] flex h-[16px] items-center justify-center border-y border-[#c3c3c3]">
        <span className="h-[6px] w-[6px] rounded-full border border-[#888] bg-[#ccc]" />
      </div>
      <div className="mt-1 flex h-[26px]">
        <div className="flex w-[39px] items-center justify-center border-t border-[#999]"><Svg><Asm /></Svg></div>
        <div className="flex border-l border-[#999]">
          {panelTabs.map((p, i) => (
            <div key={i} className="flex w-10 items-center justify-center border-b border-r border-t border-[#999] bg-[#d4d4d4]">{p}</div>
          ))}
        </div>
        <div className="mr-[2px] flex flex-1 items-center justify-end border-b border-[#c3c3c3] pr-[5px]">
          <Svg w={7} h={10}><path d="M1 .5L5.500 5 1 9.500" stroke="#666" strokeWidth="2" /></Svg>
        </div>
      </div>
      <div className="ml-[3px] flex h-[26px] w-[231px] items-center border border-[#c3c3c3] pl-px">
        <Svg><path d="M1 1h16v2.500L11 10v7H8v-7L1 3.500z" fill="#f5f5f5" stroke={K} /><path d="M1 1h16v2.500H1z" fill={BL} stroke={DB} /></Svg>
        <span className="ml-px mt-[6px]"><Caret /></span>
      </div>
      <div className="flex w-[235px] flex-col overflow-hidden whitespace-nowrap">
        <div className="flex h-[22px] items-center pl-[2px] pt-[1px]">
          <Svg><Asm /></Svg>
          <span className="ml-[5px] whitespace-pre tracking-[-0.16px]">Cooling Fan  (Default&lt;Display State-1&gt;)</span>
        </div>
        {rows.map((r) => (
          <div key={r.t} className="flex h-[22px] items-center pt-[2px]">
            <div className="ml-[8px] w-[17px] shrink-0 pb-[3px]">
              {r.exp && <Svg w={5} h={8}><path d="M0 0l4.500 4L0 8z" fill="#666" /></Svg>}
            </div>
            {r.icon}
            <span className={`ml-[5px] ${r.wide ?? ""}`}>{r.t}</span>
          </div>
        ))}
        <div className="h-[3px] border-b border-[#1a1ab0] bg-[#2a8fd8]" />
      </div>
      <div className="mb-[3px] mr-[2px] mt-auto flex h-[15px] items-center bg-[#f0f0f0]">
        <div className="flex w-4 justify-center pr-1"><Svg w={7} h={8}><path d="M6 0L2 4l4 4" stroke="#555" strokeWidth="1.800" /></Svg></div>
        <div className="h-[15px] w-[130px] bg-[#cdcdcd]" />
        <div className="ml-auto mr-[1px]"><Svg w={7} h={8}><path d="M1 0l4 4-4 4" stroke="#555" strokeWidth="1.800" /></Svg></div>
      </div>
    </aside>
  );
}

/* ---------- 3D model ---------- */

const bore =
  "M734 318C700 350 668 415 673 460C676 487 688 516 720 527C735 532 760 534 785 526C820 512 850 490 863 477C872 465 880 457 887 448C905 420 922 370 925 335C926 310 915 298 907 289C892 270 870 262 847 263C810 266 775 283 746 308z";

function Model() {
  const face = "#07567c";
  const side = "#065073";
  const dark = "#022a3b";
  const lt = "#b0b0b0";
  return (
    <svg width="1102" height="526" viewBox="238 168 1102 526" className="block shrink-0" strokeLinejoin="round" stroke="#000" strokeWidth="1.100" fill="none">
      {/* rear housing */}
      <path d="M976 318L1034 326C1046 329 1053 340 1051 349Q1050 355 1048 359L935 598C930 610 920 620 908 620L898 618L706 591L697 583C688 578 687 570 689 562L699 543L840 480z" fill={side} />
      <path d="M699 543L870 560L838 603L898 612Q895 617 898 618L706 591L697 583L757 592z" fill={dark} stroke="none" />
      <path d="M699 543L757 592L697 583C688 578 687 568 689 562z" fill={lt} />
      <path d="M697 583L706 591L898 618M697 583L757 592M838 603L898 612" />
      <path d="M898 612C912 614 920 605 927 592L935 598C928 614 918 621 905 620L898 618z" fill="url(#round)" />
      <path d="M1034 326C1044 330 1043 342 1041 352L1048 359C1053 350 1053 338 1044 331z" fill={side} />
      <path d="M1041 352L927 592" />
      <path d="M976 318L948 373L1005 422L1041 352C1043 342 1044 330 1034 326z" fill={lt} />
      <path d="M976 318C996 332 1010 370 1007 420L1005 422L948 373z" fill="#a6a6a6" />
      <path d="M902 471L959 520L927 592C920 607 912 614 898 612L838 603L781 555z" fill={lt} />
      <path d="M902 471L959 520C930 563 890 592 838 603L781 555z" fill="url(#surf)" />
      <ellipse cx="1017" cy="349" rx="6" ry="7.500" transform="rotate(25 1017 349)" fill="url(#hole)" />
      <ellipse cx="908" cy="584" rx="6" ry="7.500" transform="rotate(25 908 584)" fill="url(#hole)" />
      <path d="M718 554C724 564 712 571 708 564C705 559 708 555 712 554z" fill="url(#hole)" />

      {/* front flange thickness */}
      <path d="M967 269C978 272 986 282 985 291Q984 297 981 301L869 543C862 555 852 563 840 562L641 533L628 525L832 555L860 535L974 295z" fill={side} />
      <path d="M628 525L641 533L840 562L832 555z" fill={dark} />
      <path d="M832 555C848 556 854 548 860 535L869 543C862 556 852 563 840 562z" fill="url(#round)" />
      <path d="M974 295L981 301" />
      {/* front flange */}
      <path d="M738 262C744 249 752 239 766 240L967 269C977 272 978 284 974 295L860 535C853 551 845 558 828 554L636 528C624 525 619 516 624 504z" fill={face} />

      {/* bore and rotor */}
      <clipPath id="boreClip"><path d={bore} /></clipPath>
      <path d={bore} fill="url(#bore)" />
      <g clipPath="url(#boreClip)">
        <path d="M866 362L893 334C905 330 915 329 930 328V440L901 432L893 409L878 392z" fill="#fff" strokeWidth=".8" />
        <path d="M864 372C880 358 900 338 930 324V360C910 368 895 382 882 397L850 392z" fill="url(#olive2)" />
        <path d="M864 372C880 356 900 338 930 324L930 328C900 342 880 358 864 372z" fill="red" stroke="#300" strokeWidth=".6" />
        <path d="M838 362C842 340 850 315 856 302L858 325L866 340L845 372z" fill="url(#olive)" />
        <path d="M837 361C841 338 850 312 856 302C851 318 844 345 841 364z" fill="red" stroke="#300" strokeWidth=".6" />
        <path d="M845 388L870 388C885 396 903 410 902 432L887 448L845 455L832 474L786 450z" fill="url(#rotor)" />
        <path d="M782 448L820 442L840 478C815 472 800 462 782 448z" fill="#022a3b" stroke="none" />
        <path d="M834 421L910 407V414C885 420 860 424 840 423z" fill="#5d5510" />
        <path d="M834 421L910 407V411L838 422z" fill="red" strokeWidth=".7" />
        <path d="M832 452C850 453 870 451 890 447L863 477z" fill="#ecdf34" />
        <path d="M770 346C765 360 767 375 771 388L797 372V364z" fill="#5b5410" />
        <path d="M772 388C745 394 722 412 718 432C716 442 719 450 724 456L770 404z" fill="#8a811a" />
        <path d="M772 388C745 393 724 412 719 428" stroke="#400" strokeWidth="2.600" />
        <path d="M772 388C745 393 724 412 719 428" stroke="#e01010" strokeWidth="1.200" />
        <path d="M766 416L776 448C770 475 775 505 786 530H737C720 510 722 485 731 469z" fill="url(#yel1)" />
        <path d="M737 532C720 508 724 485 731 469" stroke="#c00" strokeWidth="1.500" />
        <path d="M776 446C792 450 798 464 832 473L852 488L840 500L786 528C774 505 770 475 776 446z" fill="url(#yel2)" />
        <path d="M776 446C771 475 774 502 785 528" stroke="#400" strokeWidth="3.400" />
        <path d="M776 446C771 475 774 502 785 528" stroke="#e01010" strokeWidth="1.800" />
      </g>
      <path d={bore} />
      {/* hub ring */}
      <path d="M814 359C832 354 849 368 848 388C847 412 827 441 800 449C782 453 764 441 764 424L790 395z" fill="red" />
      <path d="M826 368Q834 368 838 376L834 378Q832 372 826 368zM773 427C779 434 785 438 792 439L790 441C781 440 775 434 773 427zM806 436C824 430 836 418 840 404C835 414 824 426 803 433z" fill="#ff0" strokeWidth=".7" />
      {/* struts */}
      <path d="M746 308L822 363L797 367L734 318z" fill={face} stroke="none" />
      <path d="M746 308L822 363M734 318L797 367" />
      <path d="M741 309.500L807 362L801 364L738 313.500z" fill="#ff0" />
      <path d="M907 289L919 296L917 306L826 417L812 410L832 384z" fill={face} stroke="none" />
      <path d="M907 289L831 382" />
      <path d="M914 290L832 386L831 392L917 294z" fill="#223" />
      <path d="M914.500 292L832 389" stroke="#d8cc10" strokeDasharray="1.500 1.500" strokeWidth="1" />
      <path d="M914 298L917 306L826 417L821 413z" fill="#ff0" />
      <path d="M767 401L683 497L691 507L696 511L768 423L780 405z" fill={face} stroke="none" />
      <path d="M767 401L684 497" />
      <path d="M766 407L682 502L684 506L767 412z" fill="#223" />
      <path d="M766.500 409L683 504" stroke="#d8cc10" strokeDasharray="1.500 1.500" strokeWidth="1" />
      <path d="M766 414L769 423L696 511L691 507z" fill="#ff0" />
      <path d="M799 425L806 431L863 477L860 492L852 490L789 433z" fill={face} stroke="none" />
      <path d="M802 428L863 477M790 433L852 490" />
      <path d="M790 432L797 431L863 485L860 488z" fill="#ff0" />
      {/* hub */}
      <path d="M797 367C804 363 810 361 816 361C826 364 832 374 831 384L833 394L821 413C816 422 805 429 797 431C780 430 768 422 767 412C764 394 780 375 797 367z" fill={face} stroke="none" />
      <path d="M797 367C780 375 764 394 768 420C774 427 784 431 790 432M816 359C826 364 832 374 831 384M821 413C816 422 808 428 802 430" />

      {/* corner pockets */}
      <path d="M769 256Q772 254 776 255L803 260Q808 263 802 267C780 275 755 293 738 310L725 322Q720 324 720 319L740 279Q743 273 748 275Q760 290 770 277Q774 266 765 262z" fill={lt} />
      <path d="M774 255L803 260Q807 262 803 264L775 260z" fill="#666" />
      <path d="M740 279L745 281L724 322" />
      <path d="M756 280Q768 278 767 262" stroke="#777" strokeWidth="3" />
      <ellipse cx="756" cy="269" rx="9" ry="10" transform="rotate(30 756 269)" fill={face} stroke="none" />
      <ellipse cx="756" cy="268" rx="6.500" ry="8" transform="rotate(30 756 268)" fill="url(#hole)" />

      <path d="M909 276Q912 272 917 273L947 278Q951 282 943 287Q940 300 952 303Q957 304 955 309L936 346Q931 350 930 344C930 325 925 305 912 286Q907 281 909 276z" fill={lt} />
      <path d="M914 273L947 278Q950 280 948 283L916 279z" fill="#666" />
      <path d="M912 288C925 300 935 325 935 347" />
      <ellipse cx="950" cy="293" rx="8.500" ry="10" transform="rotate(30 950 293)" fill={face} stroke="none" />
      <path d="M946 284C941 291 942 299 948 302" />
      <ellipse cx="950" cy="293" rx="6" ry="8" transform="rotate(30 950 293)" fill="url(#hole)" />

      <path d="M660 449Q667 444 668 452C670 475 677 493 688 511Q691 521 684 522L654 517Q648 515 652 508L641 493Q640 491 641 489z" fill={lt} />
      <path d="M660 449Q665 450 664 455L646 494L641 491z" fill="#999" />
      <path d="M655 494Q668 500 660 511Q656 517 650 514" stroke="#555" />
      <ellipse cx="649" cy="502" rx="8.500" ry="10" transform="rotate(30 649 502)" fill={face} stroke="none" />
      <ellipse cx="648" cy="502" rx="6" ry="8" transform="rotate(30 648 502)" fill="url(#hole)" />

      <path d="M868 475Q876 471 877 478L858 518Q852 522 848 520L833 528L832 538Q828 541 822 540L795 536Q789 532 794 527C825 521 848 500 868 475z" fill={lt} />
      <path d="M868 475Q875 472 874 480C855 505 830 525 798 533Q790 530 794 527C825 521 848 500 868 475z" fill="#777" />
      <ellipse cx="841" cy="526" rx="9" ry="10.500" transform="rotate(30 841 526)" fill={face} stroke="none" />
      <path d="M851 520C847 515 839 516 835 522C831 529 832 533 832 538" />
      <ellipse cx="841" cy="527" rx="6" ry="8" transform="rotate(30 841 527)" fill="url(#hole)" />

      {/* triad */}
      <g>
        <path d="M279 636L288 617" stroke="#1d7a22" strokeWidth="3.500" />
        <path d="M292 609L291.500 620L284 617z" fill="#145c18" stroke="#0c3f10" strokeWidth=".6" />
        <path d="M278 636L265 634" stroke="#a81818" strokeWidth="3.500" />
        <path d="M258 633L267 629V638z" fill="#a81818" stroke="#600" strokeWidth=".6" />
        <path d="M279 637L290 646" stroke="#1818a0" strokeWidth="3.500" />
        <path d="M297 651L287 649L293 642z" fill="#1818a0" stroke="#0b0b60" strokeWidth=".6" />
      </g>
      <path d="M253 628l6 8M259 628l-6 8" stroke="red" strokeWidth="1" />
      <path d="M289 600l3.500 4.500L296 600M292.500 604.500v3.500" stroke="green" strokeWidth="1" />
      <path d="M294 649h5l-5 7h5" stroke="blue" strokeWidth="1" />
    </svg>
  );
}

function TaskPane() {
  const items = [
    <Svg><path d="M3 8v9h12V8L9 2z" fill="#f7f7f7" stroke={K} /><path d="M7.500 17v-6h4v6" stroke={K} /><path d="M1 9l8-7.500L17 9" stroke="#135a80" strokeWidth="3" /><path d="M1 9l8-7.500L17 9" stroke="#4aa3cc" strokeWidth="1" /></Svg>,
    <Svg><path d="M2 5l3-3 3 1 2-2 3 1 2-1v13l-6 4-7-3z" fill="#eee" stroke={K} /><path d="M2 5l4 1.500V18M6 6.500L9 3M6 6.500l3.500.5v11M9.500 7L13 3M12 6v10" stroke={K} /></Svg>,
    <Svg w={20}><path d="M1 16V2h5l2 2h9v3" fill="#bbb" stroke={K} /><path d="M1 16.500L6 7h13.500L15 16.500z" fill="#f5f5f5" stroke={K} /></Svg>,
    <Svg><rect x=".7" y="1.700" width="16.600" height="14.600" fill="#fff" stroke={K} /><path d="M3 4h7v3H3zM12 4h3v3h-3zM5 9h3v2.500h3V14H3v-2.500h2z" fill="#f6c21c" stroke="#5a4200" /><path d="M13 9h4v7h-4z" fill="#888" /></Svg>,
    <Svg><Ball /></Svg>,
    <Svg><ListGlyph /></Svg>,
    <Svg><path d="M1 2h11v8H6l-3 3v-3H1z" fill="url(#blue)" stroke={DB} /><path d="M8 7h9v7h-1v3l-3-3H8z" fill="#f3f3f3" stroke={K} /></Svg>,
  ];
  return (
    <div className="mt-[29px] flex w-[26px] flex-col self-start border-l border-t border-[#808080]">
      {items.map((it, i) => (
        <div key={i} className={`flex h-6 items-center justify-center border-b border-[#808080] pb-px pr-px ${i === 4 ? "bg-[#f7f7f7]" : "bg-[#d4d4d4]"}`}>{it}</div>
      ))}
    </div>
  );
}

function Bottom() {
  const nav = ["M4 3v8M10 3L5.500 7l4.500 4z", "M9 3L4.500 7 9 11z", "M5 3l4.500 4L5 11z", "M4 3l4.500 4L4 11zM10 3v8"];
  return (
    <>
      <div className="flex h-4 border-y border-[#808080] bg-[#f7f7f7]">
        <div className="flex w-[67px] border-r border-[#808080] bg-[#aaa] pl-[2px]">
          {nav.map((d, i) => (
            <div key={i} className="flex w-4 items-center justify-center border-r border-[#888] bg-[#b0b3b5]">
              <Svg w={14} h={14}><path d={d} stroke="#888" fill="#999" /></Svg>
            </div>
          ))}
        </div>
        <div className="flex w-[56px] items-center justify-center pl-[3px] font-bold tracking-[-0.4px]">Model</div>
        <div className="flex w-[68px] items-center justify-center border-x border-[#808080] bg-[#d4d4d4] pl-px tracking-[-0.35px]">3D Views</div>
        <div className="flex w-[108px] items-center border-r border-[#808080] bg-[#d4d4d4] pl-[10px]">Motion Study 1</div>
      </div>
      <footer className="flex h-[19px] items-center border-b border-[#c3c3c3] bg-[#f7f7f7] pt-px">
        <span className="pl-px tracking-[-0.35px]">Select entities to modify their appearance</span>
        <div className="ml-auto flex h-[17px] items-center">
          <div className="flex h-full items-center pr-[8px] tracking-[-0.45px]">Under Defined</div>
          <div className="flex h-full w-[109px] items-center justify-center border-x border-[#ccc] pl-px tracking-[-0.3px]">Editing Assembly</div>
          <div className="h-full w-[15px] border-r border-[#ccc]" />
          <div className="flex w-[177px] items-center pl-[31px]">
            <span className="w-[55px]">MMGS</span>
            <Svg w={5} h={3}><path d="M0 3h5L2.500 0z" fill="#444" /></Svg>
            <span className="ml-auto mr-[4px]">
              <Svg w={15} h={14}><path d="M1 6l6-5 7 4v5l-4 3-9-5z" fill="#e8e8e8" stroke={K} /><path d="M4 5l6 4M6 3.500l6 4M10 13V9l4-4" stroke={K} /></Svg>
            </span>
          </div>
        </div>
      </footer>
    </>
  );
}

export default function App() {
  return (
    <div className="flex h-[729px] w-[1366px] flex-col overflow-hidden bg-white font-['Open_Sans','Noto_Sans',sans-serif] text-[12px] leading-4 tracking-[-0.25px] text-black">
      <Defs />
      <TitleBar />
      <ViewBar />
      <Ribbon />
      <TabRow />
      <main className="relative flex h-[526px] overflow-hidden">
        <Tree />
        <Model />
        <TaskPane />
        <div className="absolute left-[237px] top-[232px] flex h-[39px] w-[9px] items-center justify-center border border-l-0 border-[#808080] bg-[#f7f7f7]">
          <span className="h-[6px] w-[6px] rounded-full border border-[#888] bg-[#ccc]" />
        </div>
      </main>
      <Bottom />
    </div>
  );
}
